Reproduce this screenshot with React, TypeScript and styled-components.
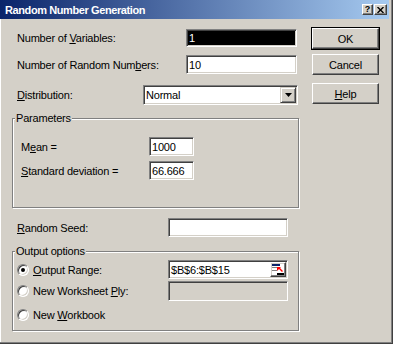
import React from 'react'
import styled, { createGlobalStyle } from 'styled-components'

const GlobalStyle = createGlobalStyle`
  html, body {
    margin: 0;
    padding: 0;
    background: #d4d0c8;
  }
  body {
    font-family: "Liberation Sans", Arial, sans-serif;
    font-size: 11px;
    letter-spacing: -0.2px;
    color: #000;
  }
`

const Window = styled.div`
  width: 393px;
  height: 344px;
  box-sizing: border-box;
  padding: 0 4px 4px 0;
  background: #d4d0c8;
  box-shadow: inset -1px -1px 0 #404040, inset -2px -2px 0 #808080,
    inset 1px 0 0 #fff;
  display: flex;
  flex-direction: column;
`

const TitleBar = styled.div`
  height: 19px;
  display: flex;
  align-items: center;
  padding: 0 2px 0 5px;
  background: linear-gradient(to right, #0a246a, #a6caf0);
  color: #fff;
  font-weight: bold;
  font-size: 11px;
  letter-spacing: -0.4px;
`

const Title = styled.span`
  flex: 1;
`

const CaptionButton = styled.div<{ $width: number }>`
  width: ${(p) => p.$width}px;
  height: 11px;
  box-sizing: border-box;
  margin-left: 1px;
  background: #d4d0c8;
  border: 1px solid;
  border-color: #fff #404040 #404040 #fff;
  box-shadow: inset -1px -1px 0 #808080;
  display: flex;
  align-items: center;
  justify-content: center;
  color: #000;
  font-size: 9px;
  font-weight: bold;
  line-height: 9px;
  letter-spacing: 0;
`

const Body = styled.div`
  flex: 1;
  display: flex;
`

const FormColumn = styled.div`
  width: 312px;
  display: flex;
  flex-direction: column;
`

const Row = styled.div<{ $label: number; $top: number }>`
  display: grid;
  grid-template-columns: ${(p) => p.$label}px auto;
  align-items: center;
  margin-top: ${(p) => p.$top}px;
`

const Label = styled.span<{ $indent?: number }>`
  padding-left: ${(p) => p.$indent ?? 17}px;
  white-space: nowrap;
`

const U = styled.span`
  text-decoration: underline;
  text-underline-offset: 1px;
`

const TextBox = styled.div<{
  $width: number
  $height?: number
  $disabled?: boolean
  $selected?: boolean
}>`
  box-sizing: border-box;
  width: ${(p) => p.$width}px;
  height: ${(p) => p.$height ?? 19}px;
  border: 1px solid;
  border-color: #808080 #fff #fff #808080;
  box-shadow: inset 1px 1px 0 #404040, inset -1px -1px 0 #d4d0c8;
  background: ${(p) =>
    p.$selected ? '#000' : p.$disabled ? '#d4d0c8' : '#fff'};
  color: ${(p) => (p.$selected ? '#fff' : '#000')};
  padding: 1px 1px 1px 2px;
  display: flex;
  align-items: center;
  white-space: nowrap;
`

const BoxText = styled.span`
  flex: 1;
`

const ArrowButton = styled.div`
  width: 16px;
  height: 16px;
  box-sizing: border-box;
  background: #d4d0c8;
  border: 1px solid;
  border-color: #d4d0c8 #404040 #404040 #d4d0c8;
  box-shadow: inset 1px 1px 0 #fff, inset -1px -1px 0 #808080;
  display: flex;
  align-items: center;
  justify-content: center;
`

const RefButton = styled.div`
  width: 16px;
  height: 15px;
  box-sizing: border-box;
  background: #d4d0c8;
  border: 1px solid;
  border-color: #fff #404040 #404040 #fff;
  box-shadow: inset -1px -1px 0 #808080;
  display: flex;
  align-items: center;
  justify-content: center;
`

const Group = styled.div<{ $top: number; $height: number }>`
  position: relative;
  box-sizing: border-box;
  margin: ${(p) => p.$top}px 0 0 12px;
  width: 287px;
  height: ${(p) => p.$height}px;
  border: 1px solid #808080;
  box-shadow: inset 1px 1px 0 #fff, 1px 1px 0 #fff;
  display: flex;
  flex-direction: column;
`

const Legend = styled.span`
  position: absolute;
  top: -7px;
  left: 2px;
  padding: 0 1px;
  line-height: 13px;
  background: #d4d0c8;
`

const GroupBody = styled.div<{ $top: number; $left: number }>`
  padding: ${(p) => p.$top}px 0 0 ${(p) => p.$left}px;
  display: flex;
  flex-direction: column;
`

const OptionRow = styled.div<{ $top: number }>`
  display: grid;
  grid-template-columns: 151px auto;
  align-items: center;
  height: 19px;
  margin-top: ${(p) => p.$top}px;
`

const Option = styled.label`
  display: flex;
  align-items: center;
  gap: 4px;
  white-space: nowrap;
`

const Radio = styled.span<{ $checked?: boolean }>`
  width: 12px;
  height: 12px;
  box-sizing: border-box;
  border-radius: 50%;
  border: 1px solid;
  border-color: #808080 #fff #fff #808080;
  box-shadow: inset 1px 1px 0 #404040, inset -1px -1px 0 #d4d0c8;
  background: #fff;
  display: flex;
  align-items: center;
  justify-content: center;

  &::after {
    content: '';
    width: 4px;
    height: 4px;
    border-radius: 50%;
    background: #000;
    display: ${(p) => (p.$checked ? 'block' : 'none')};
  }
`

const ButtonColumn = styled.div`
  display: flex;
  flex-direction: column;
  padding-top: 9px;
`

const Button = styled.div<{ $top: number; $default?: boolean }>`
  width: 67px;
  height: 21px;
  box-sizing: border-box;
  margin-top: ${(p) => p.$top}px;
  border: 1px solid;
  border-color: #fff #404040 #404040 #fff;
  box-shadow: inset -1px -1px 0 #808080
    ${(p) => (p.$default ? ', 0 0 0 1px #000' : '')};
  display: flex;
  align-items: center;
  justify-content: center;
`

const RangeIcon = () => (
  <svg width='12' height='11' viewBox='0 0 12 11'>
    <rect x='0' y='0' width='12' height='11' fill='#fff' />
    <rect x='0' y='0' width='8' height='2' fill='#0a246a' />
    <rect x='0' y='3' width='7' height='1' fill='#808080' />
    <rect x='0' y='6' width='5' height='1' fill='#808080' />
    <path d='M5 3 L9 3 L8 4 L11 7 L10 8 L7 5 L5 7 Z' fill='#f00' />
    <rect x='5' y='9' width='7' height='2' fill='#000' />
  </svg>
)

export default function App() {
  return (
    <>
      <GlobalStyle />
      <Window>
        <TitleBar>
          <Title>Random Number Generation</Title>
          <CaptionButton $width={11}>?</CaptionButton>
          <CaptionButton $width={13}>
            <svg width='7' height='6' viewBox='0 0 7 6'>
              <path d='M0.5 0 L6.5 6 M6.5 0 L0.5 6' stroke='#000' strokeWidth='1.4' />
            </svg>
          </CaptionButton>
        </TitleBar>
        <Body>
          <FormColumn>
            <Row $label={186} $top={10}>
              <Label>
                Number of <U>V</U>ariables:
              </Label>
              <TextBox $width={111} $height={18} $selected>
                1
              </TextBox>
            </Row>
            <Row $label={186} $top={8}>
              <Label>
                Number of Random Num<U>b</U>ers:
              </Label>
              <TextBox $width={111}>10</TextBox>
            </Row>
            <Row $label={143} $top={11}>
              <Label>
                <U>D</U>istribution:
              </Label>
              <TextBox $width={155} $height={20}>
                <BoxText>Normal</BoxText>
                <ArrowButton>
                  <svg width='7' height='4' viewBox='0 0 7 4'>
                    <path d='M0 0 H7 L3.5 4 Z' fill='#000' />
                  </svg>
                </ArrowButton>
              </TextBox>
            </Row>

            <Group $top={13} $height={90}>
              <Legend>Parameters</Legend>
              <GroupBody $top={18} $left={8}>
                <Row $label={128} $top={0}>
                  <Label $indent={0}>
                    M<U>e</U>an =
                  </Label>
                  <TextBox $width={45}>1000</TextBox>
                </Row>
                <Row $label={128} $top={5}>
                  <Label $indent={0}>
                    <U>S</U>tandard deviation =
                  </Label>
                  <TextBox $width={45}>66.666</TextBox>
                </Row>
              </GroupBody>
            </Group>

            <Row $label={168} $top={10}>
              <Label>
                <U>R</U>andom Seed:
              </Label>
              <TextBox $width={120} />
            </Row>

            <Group $top={14} $height={80}>
              <Legend>Output options</Legend>
              <GroupBody $top={8} $left={4}>
                <OptionRow $top={0}>
                  <Option>
                    <Radio $checked />
                    <span>
                      <U>O</U>utput Range:
                    </span>
                  </Option>
                  <TextBox $width={120}>
                    <BoxText>$B$6:$B$15</BoxText>
                    <RefButton>
                      <RangeIcon />
                    </RefButton>
                  </TextBox>
                </OptionRow>
                <OptionRow $top={2}>
                  <Option>
                    <Radio />
                    <span>
                      New Worksheet <U>P</U>ly:
                    </span>
                  </Option>
                  <TextBox $width={120} $height={20} $disabled />
                </OptionRow>
                <OptionRow $top={5}>
                  <Option>
                    <Radio />
                    <span>
                      New <U>W</U>orkbook
                    </span>
                  </Option>
                </OptionRow>
              </GroupBody>
            </Group>
          </FormColumn>

          <ButtonColumn>
            <Button $top={0} $default>
              OK
            </Button>
            <Button $top={5}>Cancel</Button>
            <Button $top={8}>
              <U>H</U>elp
            </Button>
          </ButtonColumn>
        </Body>
      </Window>
    </>
  )
}
